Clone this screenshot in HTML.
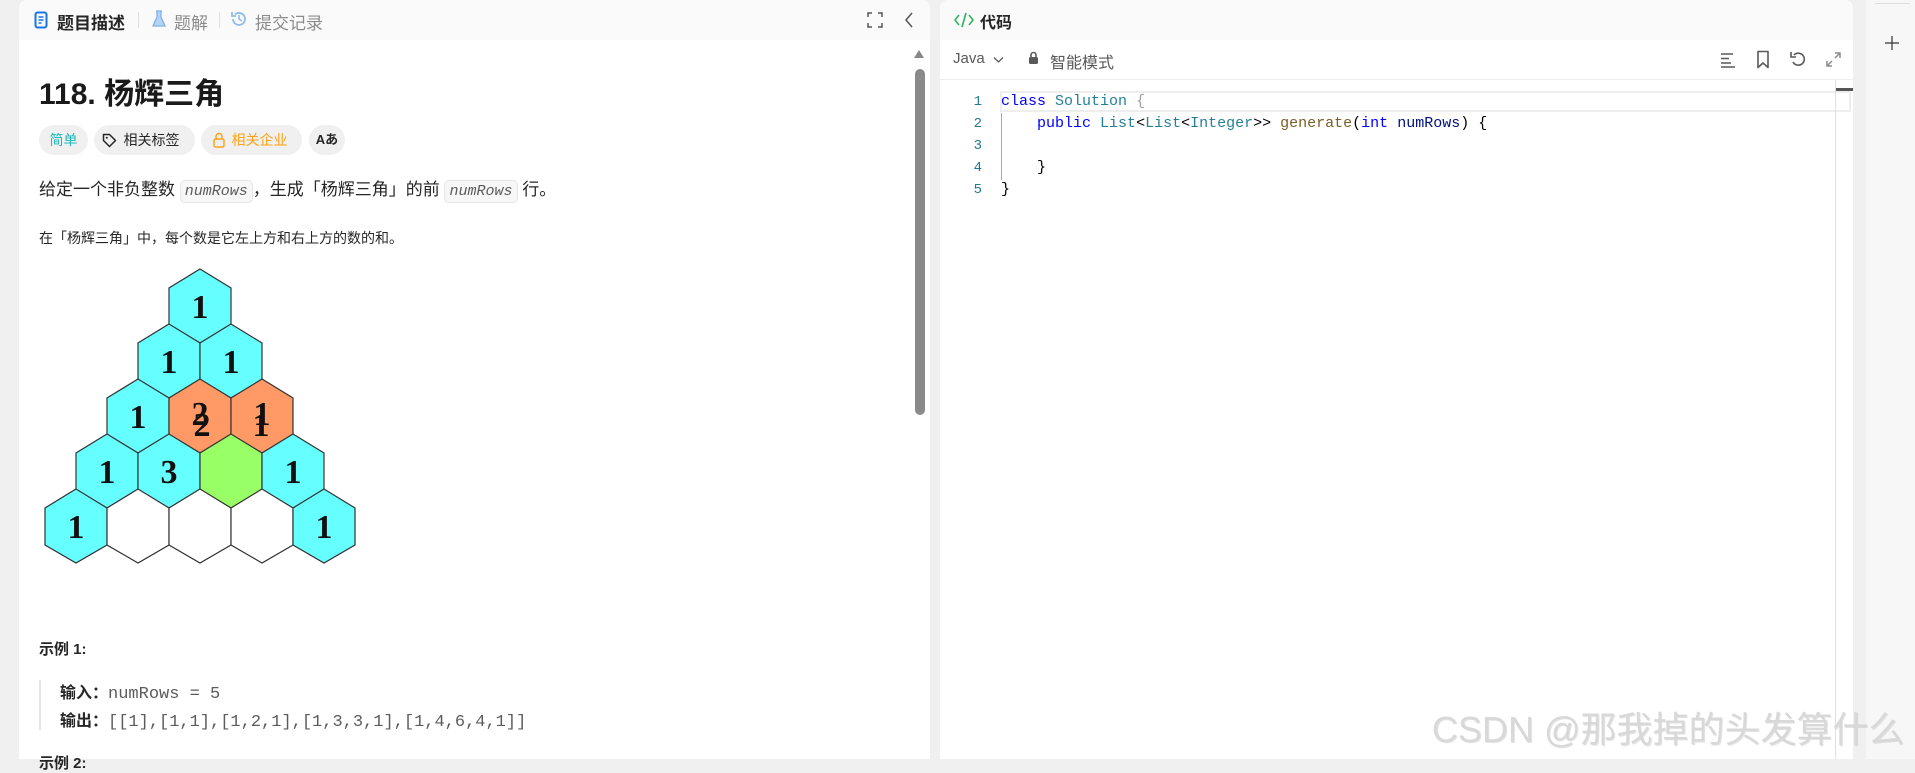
<!DOCTYPE html>
<html><head><meta charset="utf-8"><style>
*{margin:0;padding:0;box-sizing:border-box}
body{width:1915px;height:759px;overflow:hidden;background:#f0f0f0;font-family:"Liberation Sans","Noto Sans CJK SC",sans-serif;position:relative;color:#262626}
.abs{position:absolute}
.panel{position:absolute;top:0;background:#fff;border-radius:8px 8px 0 0;overflow:hidden}
.hdr{position:absolute;left:0;top:0;right:0;height:40px;background:#fafafa}
.tag{position:absolute;top:125px;height:30px;border-radius:15px;background:#f0f0f0;font-size:14px;line-height:30px;text-align:center}
code{font-family:"Liberation Mono",monospace;font-style:italic;font-size:15px;color:#5c5c5c;background:#f7f7f7;border:1px solid #e6e6e6;border-radius:5px;padding:2px 4px}
.cl{position:absolute;left:1001px;font-family:"Liberation Mono",monospace;font-size:15px;white-space:pre;line-height:22px;color:#000}
.ln{position:absolute;left:960px;width:22px;text-align:right;font-family:"Liberation Mono",monospace;font-size:14px;color:#237893;line-height:22px}
.k{color:#0000ff}.t{color:#267f99}.f{color:#795e26}.v{color:#001080}
</style></head><body>
<div class="panel" style="left:19px;width:911px;height:759px">
 <div class="hdr"></div>
</div>
<svg class="abs" style="left:34px;top:11px" width="14" height="18" viewBox="0 0 14 18"><rect x="1.5" y="1.5" width="11" height="15" rx="2" fill="none" stroke="#1a73e8" stroke-width="2"/><path d="M4.5 6h5M4.5 9h5M4.5 12h3" stroke="#1a73e8" stroke-width="1.6"/></svg>
<div class="abs" style="left:57px;top:9px;font-size:17px;font-weight:bold;color:#262626">题目描述</div>
<div class="abs" style="left:138px;top:12px;width:1px;height:16px;background:#e0e0e0"></div>
<svg class="abs" style="left:151px;top:10px" width="16" height="18" viewBox="0 0 16 18"><path d="M5 1h6M6 1v6L2 16h12L10 7V1" fill="#b3d4f5" stroke="#7fb2e8" stroke-width="1.3"/></svg>
<div class="abs" style="left:174px;top:9px;font-size:17px;color:#8c8c8c">题解</div>
<div class="abs" style="left:219px;top:12px;width:1px;height:16px;background:#e0e0e0"></div>
<svg class="abs" style="left:230px;top:10px" width="18" height="18" viewBox="0 0 18 18"><path d="M3 9a6 6 0 1 0 2-4.5M2 2v4h4" fill="none" stroke="#8fbbe9" stroke-width="1.8"/><path d="M9 5v4l3 2" fill="none" stroke="#8fbbe9" stroke-width="1.6"/></svg>
<div class="abs" style="left:255px;top:9px;font-size:17px;color:#8c8c8c">提交记录</div>
<svg class="abs" style="left:867px;top:12px" width="16" height="16" viewBox="0 0 16 16"><path d="M1 5V1h4M11 1h4v4M15 11v4h-4M5 15H1v-4" fill="none" stroke="#555" stroke-width="1.5"/></svg>
<svg class="abs" style="left:904px;top:11px" width="10" height="18" viewBox="0 0 10 18"><path d="M8 2L2 9l6 7" fill="none" stroke="#555" stroke-width="1.5"/></svg>
<div class="abs" style="left:914px;top:50px;width:0;height:0;border-left:5px solid transparent;border-right:5px solid transparent;border-bottom:8px solid #888"></div>
<div class="abs" style="left:915px;top:69px;width:10px;height:346px;background:#8a8a8a;border-radius:5px"></div>

<div class="abs" style="left:39px;top:69px;font-size:30px;font-weight:bold;color:#1a1a1a">118. 杨辉三角</div>
<div class="tag" style="left:39px;width:49px;color:#1cbaba">简单</div>
<div class="tag" style="left:94px;width:101px;padding-left:14px">
 <svg class="abs" style="left:8px;top:8px" width="15" height="15" viewBox="0 0 15 15"><path d="M1.5 1.5h6l6 6-6 6-6-6z" fill="none" stroke="#262626" stroke-width="1.5" stroke-linejoin="round"/><circle cx="4.8" cy="4.8" r="1" fill="#262626"/></svg>相关标签</div>
<div class="tag" style="left:201px;width:101px;color:#ffa116;padding-left:16px">
 <svg class="abs" style="left:12px;top:7px" width="12" height="16" viewBox="0 0 12 16"><path d="M3 7V4.5a3 3 0 0 1 6 0V7" fill="none" stroke="#ffa116" stroke-width="1.4"/><rect x="1" y="7" width="10" height="8" rx="1.5" fill="none" stroke="#ffa116" stroke-width="1.4"/></svg>相关企业</div>
<div class="tag" style="left:309px;width:36px;font-size:13px;font-weight:bold">Aあ</div>
<div class="abs" style="left:39px;top:178px;font-size:17px;line-height:24px;color:#262626;white-space:nowrap">给定一个非负整数 <code>numRows</code>，生成「杨辉三角」的前 <code>numRows</code> 行。</div>
<div class="abs" style="left:39px;top:228px;font-size:14px;color:#262626">在「杨辉三角」中，每个数是它左上方和右上方的数的和。</div>
<svg class="abs" style="left:0;top:0" width="400" height="600" viewBox="0 0 400 600" font-family="Liberation Serif, serif" font-size="34" text-anchor="middle">
<g stroke="#333" stroke-width="1.2">
<polygon fill="#66ffff" points="200,269 231,288 231,325 200,343 169,325 169,288"/>
<polygon fill="#66ffff" points="169,324 200,343 200,380 169,398 138,380 138,343"/>
<polygon fill="#66ffff" points="231,324 262,343 262,380 231,398 200,380 200,343"/>
<polygon fill="#66ffff" points="138,379 169,398 169,435 138,453 107,435 107,398"/>
<polygon fill="#ff9966" points="200,379 231,398 231,435 200,453 169,435 169,398"/>
<polygon fill="#ff9966" points="262,379 293,398 293,435 262,453 231,435 231,398"/>
<polygon fill="#66ffff" points="107,434 138,453 138,490 107,508 76,490 76,453"/>
<polygon fill="#66ffff" points="169,434 200,453 200,490 169,508 138,490 138,453"/>
<polygon fill="#99ff66" points="231,434 262,453 262,490 231,508 200,490 200,453"/>
<polygon fill="#66ffff" points="293,434 324,453 324,490 293,508 262,490 262,453"/>
<polygon fill="#66ffff" points="76,489 107,508 107,545 76,563 45,545 45,508"/>
<polygon fill="#fff" points="138,489 169,508 169,545 138,563 107,545 107,508"/>
<polygon fill="#fff" points="200,489 231,508 231,545 200,563 169,545 169,508"/>
<polygon fill="#fff" points="262,489 293,508 293,545 262,563 231,545 231,508"/>
<polygon fill="#66ffff" points="324,489 355,508 355,545 324,563 293,545 293,508"/>
</g>
<g fill="#111" font-weight="bold">
<text x="200" y="318">1</text>
<text x="169" y="373">1</text><text x="231" y="373">1</text>
<text x="138" y="428">1</text><text x="200" y="425">2</text><text x="202" y="436">2</text><text x="262" y="425">1</text><text x="261" y="436">1</text>
<text x="107" y="483">1</text><text x="169" y="483">3</text><text x="293" y="483">1</text>
<text x="76" y="538">1</text><text x="324" y="538">1</text>
</g></svg>
<div class="abs" style="left:39px;top:638px;font-size:15px;font-weight:bold">示例 1:</div>
<div class="abs" style="left:39px;top:680px;width:2px;height:50px;background:#e6e6e6"></div>
<div class="abs" style="left:60px;top:680px;font-size:16px;line-height:27px;white-space:nowrap"><b>输入：</b><span style="font-family:'Liberation Mono',monospace;font-size:17px;color:#5c5c5c">numRows = 5</span><br><b>输出：</b><span style="font-family:'Liberation Mono',monospace;font-size:17px;color:#5c5c5c">[[1],[1,1],[1,2,1],[1,3,3,1],[1,4,6,4,1]]</span></div>
<div class="abs" style="left:39px;top:752px;font-size:15px;font-weight:bold">示例 2:</div>

<div class="panel" style="left:940px;width:913px;height:759px"><div class="hdr"></div>
 <div class="abs" style="left:0;right:0;top:79px;height:1px;background:#eee"></div>
</div>
<svg class="abs" style="left:954px;top:12px" width="20" height="16" viewBox="0 0 20 16"><path d="M5 3L1 8l4 5M15 3l4 5-4 5" fill="none" stroke="#2db55d" stroke-width="1.6"/><path d="M12 1L8 15" stroke="#2db55d" stroke-width="1.6"/></svg>
<div class="abs" style="left:980px;top:9px;font-size:16px;font-weight:bold;color:#262626">代码</div>
<div class="abs" style="left:953px;top:50px;font-size:15px;color:#595959">Java</div>
<svg class="abs" style="left:993px;top:56px" width="11" height="8" viewBox="0 0 11 8"><path d="M1 1.5l4.5 4.5L10 1.5" fill="none" stroke="#595959" stroke-width="1.3"/></svg>
<svg class="abs" style="left:1028px;top:51px" width="11" height="14" viewBox="0 0 11 14"><path d="M3 6V4a2.5 2.5 0 0 1 5 0v2" fill="none" stroke="#595959" stroke-width="1.6"/><rect x="1" y="6" width="9" height="7" rx="1.5" fill="#595959"/></svg>
<div class="abs" style="left:1050px;top:49px;font-size:16px;color:#595959">智能模式</div>
<svg class="abs" style="left:1719px;top:51px" width="18" height="18" viewBox="0 0 18 18"><path d="M2 3h12M2 7.5h8M2 12h10M2 16h14" stroke="#595959" stroke-width="1.4"/></svg>
<svg class="abs" style="left:1756px;top:50px" width="14" height="19" viewBox="0 0 14 19"><path d="M2 1.5h10v16l-5-4.5-5 4.5z" fill="none" stroke="#595959" stroke-width="1.6" stroke-linejoin="round"/></svg>
<svg class="abs" style="left:1789px;top:50px" width="18" height="18" viewBox="0 0 18 18"><path d="M5 5a6 6 0 1 1-1 7" fill="none" stroke="#595959" stroke-width="1.6"/><path d="M2 2v5h5" fill="none" stroke="#595959" stroke-width="1.6"/></svg>
<svg class="abs" style="left:1825px;top:51px" width="17" height="17" viewBox="0 0 17 17"><path d="M10 2h5v5M15 2l-5 5M7 15H2v-5M2 15l5-5" fill="none" stroke="#8c8c8c" stroke-width="1.5"/></svg>
<div class="abs" style="left:1000px;top:91px;width:851px;height:21px;border:2px solid #eeeeee"></div>
<div class="abs" style="left:1001px;top:113px;width:1px;height:67px;background:#aaa"></div>
<div class="abs" style="left:1835px;top:80px;width:1px;height:679px;background:#e0e0e0"></div>
<div class="abs" style="left:1836px;top:88px;width:17px;height:3px;background:#555"></div>
<div class="ln" style="top:91px">1</div><div class="ln" style="top:113px">2</div><div class="ln" style="top:135px">3</div><div class="ln" style="top:157px">4</div><div class="ln" style="top:179px">5</div>
<div class="cl" style="top:91px"><span class="k">class</span> <span class="t">Solution</span> <span style="color:#a0a0a0">{</span></div>
<div class="cl" style="top:113px">    <span class="k">public</span> <span class="t">List</span>&lt;<span class="t">List</span>&lt;<span class="t">Integer</span>&gt;&gt; <span class="f">generate</span>(<span class="k">int</span> <span class="v">numRows</span>) {</div>
<div class="cl" style="top:157px">    }</div>
<div class="cl" style="top:179px">}</div>
<div class="abs" style="left:1866px;top:0;width:49px;height:759px;background:#f7f7f7"></div>
<div class="abs" style="left:1875px;top:3px;width:35px;height:1px;background:#ddd"></div>
<svg class="abs" style="left:1885px;top:36px" width="14" height="14" viewBox="0 0 14 14"><path d="M7 0v14M0 7h14" stroke="#333" stroke-width="1.2"/></svg>
<div class="abs" style="left:1432px;top:701px;font-size:36px;color:rgba(215,215,215,0.95);white-space:nowrap;text-shadow:1px 1px 0 rgba(150,150,150,0.25)">CSDN @那我掉的头发算什么</div>
</body></html>
